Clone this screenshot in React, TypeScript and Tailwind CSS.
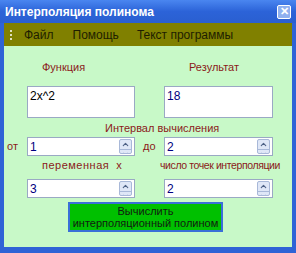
import { ChevronUp, ChevronDown } from 'lucide-react';

function Spin({ value }: { value: string }) {
  return (
    <div className="flex h-[19px] items-center justify-between border border-[#9aa9c4] bg-white pl-[2px] pr-[2px]">
      <span className="text-[12px] leading-none text-[#000080]">{value}</span>
      <div className="flex h-[15px] w-[13px] flex-col overflow-hidden rounded-[2px] border border-[#a8b8d8] bg-[#dfe7f7]">
        <div className="flex flex-1 items-center justify-center border-b border-[#a8b8d8]">
          <ChevronUp size={9} strokeWidth={3} className="text-[#4d6185]" />
        </div>
        <div className="flex flex-1 items-center justify-center">
          <ChevronDown size={9} strokeWidth={3} className="text-[#4d6185]" />
        </div>
      </div>
    </div>
  );
}

export default function App() {
  return (
    <div
      className="flex h-[253px] w-[296px] flex-col bg-[#2f63d6] text-[11px]"
      style={{ fontFamily: '"Liberation Sans", Arial, sans-serif' }}
    >
      {/* title bar */}
      <div className="flex h-[23px] items-center justify-between bg-gradient-to-b from-[#4a86f0] via-[#2c63d8] to-[#2a5fd0] pl-[5px] pr-[5px]">
        <span className="text-[12px] font-bold text-white">Интерполяция полинома</span>
        <div className="flex h-[14px] w-[14px] items-center justify-center rounded-[2px] border border-white bg-[#8fb0ef] text-[11px] font-bold leading-none text-white">
          ✕
        </div>
      </div>

      <div className="flex flex-1 flex-col px-[4px] pb-[6px]">
        {/* menu */}
        <div className="flex h-[23px] items-center bg-[#808000] pl-[6px] text-[12px] text-[#1e1e00]">
          <div className="mr-[12px] flex flex-col gap-[2px]">
            <span className="h-[2px] w-[2px] bg-[#e0e0c0]" />
            <span className="h-[2px] w-[2px] bg-[#e0e0c0]" />
            <span className="h-[2px] w-[2px] bg-[#e0e0c0]" />
          </div>
          <span>Файл</span>
          <span className="ml-[19px]">Помощь</span>
          <span className="ml-[18px]">Текст программы</span>
        </div>

        {/* client */}
        <div className="flex flex-1 flex-col bg-[#c8f9c8] pt-[15px] leading-[13px]">
          <div className="grid grid-cols-[23px_108px_29px_109px] text-[#8b1a1a]">
            <span />
            <span className="pl-[15px]">Функция</span>
            <span />
            <span className="pl-[25px]">Результат</span>
          </div>

          <div className="mt-[12px] grid grid-cols-[23px_108px_29px_109px]">
            <span />
            <div className="h-[32px] border border-[#9aa9c4] bg-white px-[2px] pt-[3px] text-[12px] text-black">
              2x^2
            </div>
            <span />
            <div className="h-[32px] border border-[#9aa9c4] bg-white px-[2px] pt-[3px] text-[12px] text-[#000080]">
              18
            </div>
          </div>

          <div className="mt-[4px] pl-[101px] text-[#8b1a1a]">Интервал вычисления</div>

          <div className="mt-[2px] grid grid-cols-[23px_108px_29px_109px] items-center">
            <span className="pl-[3px] text-[#8b1a1a]">от</span>
            <Spin value="1" />
            <span className="pl-[8px] text-[#8b1a1a]">до</span>
            <Spin value="2" />
          </div>

          <div className="mt-[3px] grid grid-cols-[23px_108px_29px_109px] text-[#8b1a1a]">
            <span />
            <span className="pl-[15px] tracking-[0.5px]">переменная&nbsp;&nbsp;x</span>
            <span />
            <span className="-ml-[4px] whitespace-nowrap text-[10.5px] tracking-[-0.4px]">число точек интерполяции</span>
          </div>

          <div className="mt-[7px] grid grid-cols-[23px_108px_29px_109px]">
            <span />
            <Spin value="3" />
            <span />
            <Spin value="2" />
          </div>

          <div className="mt-[4px] flex pl-[64px]">
            <div className="flex h-[30px] w-[155px] flex-col items-center justify-center whitespace-nowrap border-2 border-[#3a6fd8] bg-[#00c000] text-[11px] leading-[12px] text-[#102010]">
              <span>Вычислить</span>
              <span>интерполяционный полином</span>
            </div>
          </div>
        </div>
      </div>
    </div>
  );
}
